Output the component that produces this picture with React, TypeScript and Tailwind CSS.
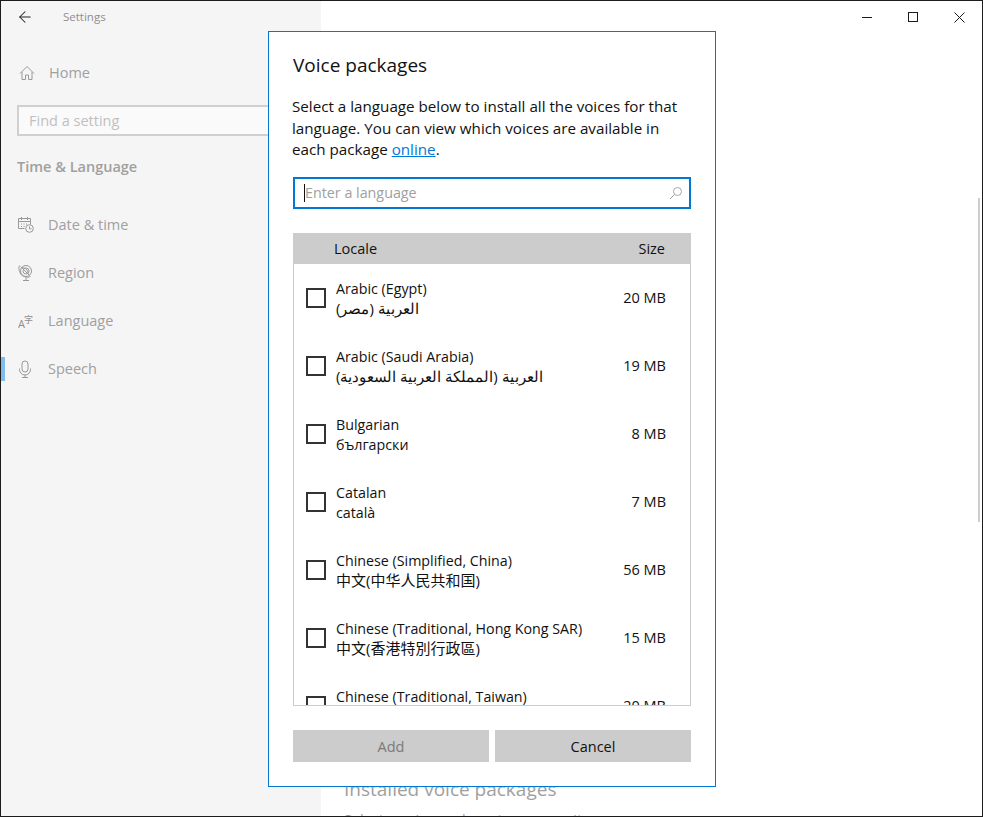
import React from "react";
import { ArrowLeft } from "lucide-react";

const rows = [
  { name: "Arabic (Egypt)", native: "العربية (مصر)", size: "20 MB", kind: "ar" },
  { name: "Arabic (Saudi Arabia)", native: "العربية (المملكة العربية السعودية)", size: "19 MB", kind: "ar" },
  { name: "Bulgarian", native: "български", size: "8 MB", kind: "la" },
  { name: "Catalan", native: "català", size: "7 MB", kind: "la" },
  { name: "Chinese (Simplified, China)", native: "中文(中华人民共和国)", size: "56 MB", kind: "sc" },
  { name: "Chinese (Traditional, Hong Kong SAR)", native: "中文(香港特別行政區)", size: "15 MB", kind: "tc" },
  { name: "Chinese (Traditional, Taiwan)", native: "中文(台灣)", size: "20 MB", kind: "tc" },
];

const HomeIcon = () => (
  <svg width="16" height="16" viewBox="0 0 16 16" fill="none" stroke="#999" strokeWidth="1">
    <path d="M1 8.500 8 1.500l7 7M3 7v7.500h3.500V10h3v4.500H13V7" />
  </svg>
);
const DateIcon = () => (
  <svg width="16" height="18" viewBox="0 0 16 18" fill="none" stroke="#999" strokeWidth="1">
    <path d="M.5 2.500h12v6M.5 2.500v10h6M.5 5.500h12M3.500 1v3M9.500 1v3" />
    <path d="M3 8h1M5.500 8h1M8 8h1M3 10.500h1M5.500 10.500h1" />
    <circle cx="11.500" cy="12.500" r="3.800" fill="#f5f5f5" />
    <path d="M11.500 10.500v2.300h2" />
  </svg>
);
const RegionIcon = () => (
  <svg width="16" height="18" viewBox="0 0 16 18" fill="none" stroke="#999" strokeWidth="1">
    <circle cx="8" cy="7" r="5.500" />
    <circle cx="8" cy="7" r="3" />
    <path d="M2.500 2.500l9 9M1.500 1.500c-1.500 3 0 7 2 9.500 2.500 2 6 3 9 1.500M8 14v2M5 16.500h6" />
    <path d="M4 4c3-1 6 2 6 6" />
  </svg>
);
const SpeechIcon = () => (
  <svg width="14" height="18" viewBox="0 0 14 18" fill="none" stroke="#999" strokeWidth="1">
    <rect x="4" y="1" width="6" height="11" rx="3" />
    <path d="M1.500 8.500v1a5.500 5.500 0 0 0 11 0v-1M7 15v2.500M4 17.500h6" />
  </svg>
);

function NavItem({ label, icon, active }: { label: string; icon: React.ReactNode; active?: boolean }) {
  return (
    <div className="relative flex h-12 items-center">
      {active && <div className="absolute left-0 top-3 h-6 w-1 bg-[#80bdeb]" />}
      <div className="flex w-[47px] pl-[17px]">{icon}</div>
      <span className="text-[14.5px] text-[#a0a0a0]">{label}</span>
    </div>
  );
}

export default function App() {
  return (
    <div
      className="relative flex h-[817px] w-[983px] overflow-hidden border border-[#1c1c1c] bg-white"
      style={{ fontFamily: '"Open Sans", "Noto Sans", "Noto Sans CJK SC", sans-serif' }}
    >
      <aside className="flex w-[320px] shrink-0 flex-col bg-[#f5f5f5]">
        <div className="flex h-[32px] items-center">
          <ArrowLeft className="ml-[15px] h-[18px] w-[18px] text-[#222]" strokeWidth={1.4} />
          <span className="ml-[29px] text-[11.500px] text-[#8f8f8f]">Settings</span>
        </div>
        <div className="mt-[16px] flex h-[48px] items-center">
          <div className="ml-[18px] w-[30px]"><HomeIcon /></div>
          <span className="text-[14.5px] text-[#a0a0a0]">Home</span>
        </div>
        <div className="ml-[16px] mt-[8px] flex h-[31px] w-[280px] items-center border-2 border-[#d0d0d0] bg-[#fafafa] pl-[10px] text-[14.5px] text-[#c0c0c0]">
          Find a setting
        </div>
        <div className="ml-[16px] mt-[20px] text-[14.5px] font-semibold text-[#a0a0a0]">Time &amp; Language</div>
        <nav className="mt-[23px] flex flex-col">
          <NavItem label="Date & time" icon={<DateIcon />} />
          <NavItem label="Region" icon={<RegionIcon />} />
          <NavItem
            label="Language"
            icon={
              <svg width="18" height="18" viewBox="0 0 18 18" fill="#8f8f8f">
                <text x="0" y="16" fontSize="11">A</text>
                <text x="6" y="11" fontSize="9" fontFamily='"Noto Sans CJK SC"'>字</text>
              </svg>
            }
          />
          <NavItem label="Speech" icon={<SpeechIcon />} active />
        </nav>
      </aside>

      <main className="flex flex-1 flex-col overflow-hidden">
        <div className="flex h-8 shrink-0 justify-end">
          <div className="flex h-8 w-[46px] items-center justify-center">
            <div className="h-px w-[10px] bg-[#1a1a1a]" />
          </div>
          <div className="flex h-8 w-[46px] items-center justify-center">
            <div className="h-[10px] w-[10px] border border-[#1a1a1a]" />
          </div>
          <div className="flex h-8 w-[46px] items-center justify-center">
            <svg width="11" height="11" viewBox="0 0 11 11" stroke="#1a1a1a" strokeWidth="1">
              <path d="M.5.5l10 10M10.500.5l-10 10" />
            </svg>
          </div>
        </div>
        <div className="ml-[23px] mt-[742px] shrink-0 text-[19px] leading-[28px] whitespace-nowrap text-[#a0a0a0]">
          Installed voice packages
        </div>
        <div className="ml-[23px] mt-[6px] shrink-0 text-[14.5px] whitespace-nowrap text-[#a0a0a0]">
          Select a voice package to manage it
        </div>
      </main>

      <div className="absolute right-[2px] top-[197px] h-[324px] w-[2px] bg-[#cdcdcd]" />

      <div
        role="dialog"
        className="absolute left-[267px] top-[30px] flex h-[756px] w-[448px] flex-col border border-[#0078d7] bg-white px-[24px] text-[#111]"
      >
        <h1 className="mt-[17px] h-[32px] text-[19px] leading-[32px]">Voice packages</h1>
        <p className="-ml-px mt-[15px] text-[15.200px] leading-[21.500px] whitespace-nowrap">
          Select a language below to install all the voices for that
          <br />
          language. You can view which voices are available in
          <br />
          each package <a className="text-[#0078d7] underline">online</a>.
        </p>
        <div className="mt-[16px] flex h-[32px] shrink-0 items-center border-2 border-[#0078d7] pl-[9px] pr-[6px]">
          <div className="h-[18px] w-px bg-[#111]" />
          <span className="flex-1 text-[14.300px] text-[#a0a0a0]">Enter a language</span>
          <svg width="14" height="14" viewBox="0 0 14 14" fill="none" stroke="#a5a5a5" strokeWidth="1">
            <circle cx="8.500" cy="5.500" r="4" />
            <path d="M5.500 8.500 1 13" />
          </svg>
        </div>
        <div className="mt-[24px] flex h-[31px] shrink-0 items-center justify-between bg-[#cccccc] pl-[41px] pr-[26px] pt-[2px] text-[14.5px]">
          <span>Locale</span>
          <span>Size</span>
        </div>
        <div className="h-[442px] shrink-0 overflow-hidden border-x border-b border-[#cccccc]">
          {rows.map((r) => (
            <div key={r.name} className="flex h-[68px] items-center pl-[12px] pr-[24px]">
              <div className="h-[20px] w-[20px] shrink-0 border-2 border-[#333]" />
              <div className="ml-[10px] h-[42px] flex-1 pt-[2px] text-[14.250px] leading-[20px] whitespace-nowrap">
                <div>{r.name}</div>
                {r.kind === "ar" && <div dir="rtl" className="-mt-px w-fit text-[15px]">{r.native}</div>}
                {r.kind === "la" && <div>{r.native}</div>}
                {r.kind === "sc" && <div lang="zh-CN" className="-mt-px text-[15px]">{r.native}</div>}
                {r.kind === "tc" && (
                  <div lang="zh-TW" className="-mt-px text-[15px]" style={{ fontFamily: '"Open Sans", "Noto Sans CJK TC", sans-serif' }}>
                    {r.native}
                  </div>
                )}
              </div>
              <div className="pt-[1px] text-[14.5px]">{r.size}</div>
            </div>
          ))}
        </div>
        <div className="mt-[24px] flex gap-[6px]">
          <button className="h-[32px] flex-1 bg-[#cccccc] pt-[2px] text-[14.5px] text-[#7a7a7a]">Add</button>
          <button className="h-[32px] flex-1 bg-[#cccccc] pt-[2px] text-[14.5px] text-[#111]">Cancel</button>
        </div>
      </div>
    </div>
  );
}
